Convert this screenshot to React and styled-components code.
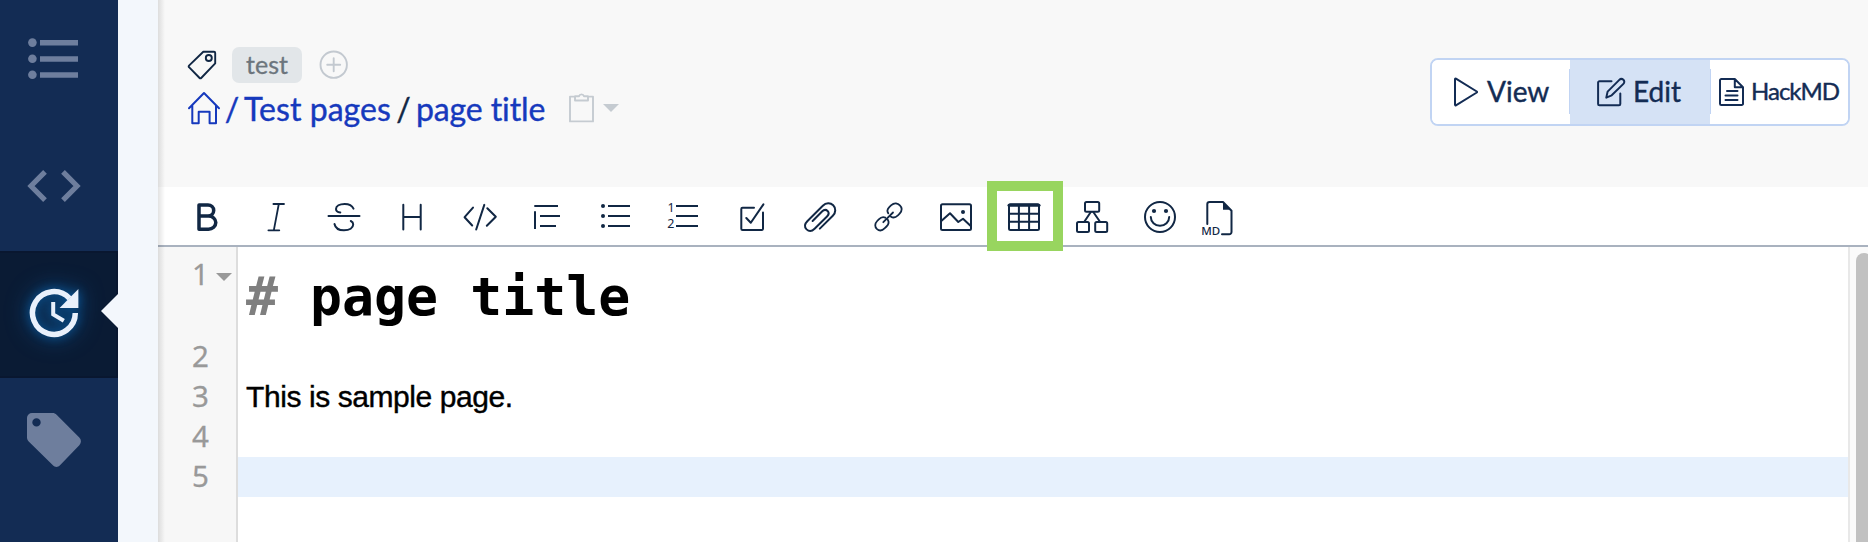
import React from "react";
import styled, { createGlobalStyle, css } from "styled-components";

const GlobalStyle = createGlobalStyle`
  *, *::before, *::after { box-sizing: border-box; }
  html, body { margin: 0; padding: 0; }
  body {
    overflow: hidden;
    font-family: Lato, "Liberation Sans", sans-serif;
    font-variant-ligatures: none;
    color: #112744;
  }
  svg { display: block; overflow: visible; flex: none; }
`;

const Page = styled.div`
  display: flex;
  width: 1868px;
  height: 542px;
  background: #f8f8f8;
`;

const Sidebar = styled.nav`
  display: flex;
  flex-direction: column;
  width: 118px;
  flex: none;
  background: #132c54;
`;

const SideItem = styled.a`
  position: relative;
  height: ${(p) => p.$height || 127}px;
  flex: none;
  padding: 35px 0 0 27px;
  color: #6e7e9d;
  ${(p) =>
    p.$active &&
    css`
      color: #e9f0fb;
      background: #0a1b34;
      box-shadow: inset -2px 2px 0 #091730, inset 0 -2px 0 #091730;
      svg {
        filter: drop-shadow(0 0 5px #0a5799) drop-shadow(0 0 10px #0b4a82);
      }
      &::after {
        content: "";
        position: absolute;
        right: 0;
        top: 43px;
        border: 17px solid transparent;
        border-left: 0;
        border-right-color: #f3f7fc;
      }
    `}
`;

const Strip = styled.div`
  width: 40px;
  flex: none;
  background: #f3f7fc;
`;

const Main = styled.main`
  display: flex;
  flex-direction: column;
  flex: 1;
  min-width: 0;
  position: relative;
  &::before {
    content: "";
    position: absolute;
    z-index: 2;
    left: 0;
    top: 0;
    bottom: 0;
    width: 7px;
    background: linear-gradient(90deg, rgba(0, 0, 0, 0.11), rgba(0, 0, 0, 0));
  }
`;

const Header = styled.header`
  display: flex;
  justify-content: space-between;
  align-items: flex-start;
  height: 187px;
  flex: none;
  padding: 47px 18px 0 30px;
  background: #f8f8f8;
`;

const TagRow = styled.div`
  display: flex;
  align-items: center;
  height: 36px;
`;

const Tag = styled.span`
  width: 70px;
  height: 36px;
  margin: 0 17px 0 16px;
  border-radius: 7px;
  background: #e2e6e9;
  color: #6c757d;
  font-size: 25px;
  line-height: 35px;
  text-align: center;
  -webkit-text-stroke: 0.3px currentColor;
`;

const PlusIcon = styled.span`
  color: #c3c9d0;
`;

const Crumbs = styled.div`
  display: flex;
  align-items: center;
  height: 48px;
  margin-top: 1px;
  font-size: 32px;
  line-height: 48px;
  white-space: pre;
  -webkit-text-stroke: 0.4px currentColor;
  svg { -webkit-text-stroke: 0; }
`;

const Crumb = styled.a`
  color: #1639bd;
  padding-top: ${(p) => (p.$icon ? 0 : 2)}px;
  letter-spacing: ${(p) => p.$spacing || 0}px;
`;

const Slash = styled.span`
  width: ${(p) => p.$width}px;
  padding-top: 2px;
  text-align: center;
  color: ${(p) => (p.$dark ? "#112744" : "#1639bd")};
`;

const CopyMenu = styled.button`
  display: flex;
  align-items: center;
  gap: 9px;
  margin: 0 0 0 24px;
  padding: 0;
  border: 0;
  background: none;
  color: #c5cbd1;
`;

const ModeGroup = styled.div`
  display: flex;
  width: 420px;
  height: 68px;
  margin-top: 11px;
  border: 2px solid #c1d4f3;
  border-radius: 8px;
  background: #fff;
  overflow: hidden;
`;

const ModeLabel = styled.span`
  padding-bottom: 2px;
  -webkit-text-stroke: 0.4px currentColor;
`;

const ModeButton = styled.button`
  display: flex;
  align-items: center;
  position: relative;
  width: ${(p) => p.$width}px;
  height: 64px;
  margin: 0;
  padding: 0 0 0 ${(p) => p.$pad}px;
  gap: ${(p) => p.$gap}px;
  border: 0;
  background: ${(p) => (p.$active ? "#d5e2f5" : "#fff")};
  color: #132c54;
  font-family: Lato, sans-serif;
  font-size: ${(p) => p.$size}px;
  letter-spacing: ${(p) => p.$spacing || 0}px;
  line-height: 40px;
  white-space: nowrap;
  ${(p) =>
    p.$active &&
    css`
      &::before,
      &::after {
        content: "";
        position: absolute;
        top: 9px;
        height: 45px;
        width: 1px;
        background: #c1d4f3;
      }
      &::before { left: -1px; }
      &::after { right: -1px; }
      z-index: 1;
    `}
`;

const Toolbar = styled.div`
  display: flex;
  height: 60px;
  flex: none;
  padding-left: 16px;
  background: #fff;
  border-bottom: 2px solid #a9b2bf;
`;

const Tool = styled.button`
  display: flex;
  align-items: center;
  justify-content: center;
  position: relative;
  width: ${(p) => p.$width || 68}px;
  height: 58px;
  margin: 0;
  padding: 0;
  border: 0;
  background: none;
  color: #112744;
  ${(p) =>
    p.$marked &&
    css`
      &::after {
        content: "";
        position: absolute;
        z-index: 3;
        left: -3px;
        top: -6px;
        width: 76px;
        height: 70px;
        border: 10px solid #98d55f;
      }
    `}
`;

const Editor = styled.div`
  display: flex;
  flex: 1;
  min-height: 0;
`;

const Gutter = styled.div`
  display: flex;
  flex-direction: column;
  width: 80px;
  padding-top: 7px;
  background: #f7f7f7;
  border-right: 2px solid #ddd;
`;

const LineNumber = styled.div`
  display: flex;
  align-items: flex-start;
  height: ${(p) => p.$height || 40}px;
  padding-left: 34px;
  color: #999;
  font: 29.5px/40px "Noto Sans", sans-serif;
  -webkit-text-stroke: 0.3px currentColor;
`;

const Fold = styled.span`
  margin: 19px 0 0 7px;
  border: 8px solid transparent;
  border-top-color: #999;
  border-bottom: 0;
`;

const Code = styled.div`
  flex: 1;
  padding-top: 8px;
  background: #fff;
`;

const Line = styled.div`
  height: 40px;
  padding-left: 8px;
  background: ${(p) => (p.$current ? "#e7f1fd" : "transparent")};
  color: #000;
  font: 30px/40px "Liberation Sans", Arial, sans-serif;
  letter-spacing: -0.42px;
  -webkit-text-stroke: 0.4px currentColor;
  white-space: pre;
`;

const HeadingLine = styled.div`
  height: 82px;
  padding-left: 8px;
  color: #000;
  font: bold 53.2px/84px "DejaVu Sans Mono", monospace;
  white-space: pre;
`;

const Mark = styled.span`
  color: #7f7f7f;
`;

const ScrollTrack = styled.div`
  width: 20px;
  padding: 6px 0 0 6px;
  border-left: 2px solid #e8e8e8;
  background: #fafafa;
  overflow: hidden;
`;

const Thumb = styled.div`
  width: 16px;
  height: 400px;
  border-radius: 8px;
  background: #c1c1c1;
`;

const Svg = ({ w, h, sw = 2, children, cap = "round" }) => (
  <svg width={w} height={h} viewBox={`0 0 ${w} ${h}`} fill="none" stroke="currentColor"
    strokeWidth={sw} strokeLinecap={cap} strokeLinejoin="round" aria-hidden="true">
    {children}
  </svg>
);

const IconText = styled.text`
  font-family: "Noto Sans", sans-serif;
  font-weight: ${(p) => p.$weight || 400};
  fill: currentColor;
  stroke: none;
`;

const tools = [
  { id: "bold", sw: 3.5, art: <path d="M11 9V33.2H20.5a7.3 6.6 0 0 0 0-13.200H11M11 9H20a5.700 5.500 0 0 1 0 11" /> },
  { id: "italic", sw: 1.8, art: <path d="M17.4 8H28M12.4 34.3H23.3M22.8 8L17.8 34.3" /> },
  { id: "strike", art: <path d="M4.5 20H35.5M29.5 12.7C28 9.5 25 8 20.7 8C15.5 8 12 10 12 13C12 15 13.5 16.2 16.3 16.5M10.5 28C11.3 32 15 34.3 20 34.3C25.5 34.3 29.2 32 29.2 28.3C29.2 27 28.3 25.7 26.8 25" /> },
  { id: "heading", art: <path d="M11.3 8.8V33.4M28.7 8.8V33.4M11.3 21H28.7" /> },
  { id: "code", art: <path d="M13 11.6L4.6 21.2L12.2 29.5M24.3 8.9L16.2 33.5M27.3 12.2L35.8 20.8L26.8 29.8" /> },
  { id: "quote", cap: "butt", art: <path d="M6.3 10H30M7 15.3V33M12 20H32M12 30H28" /> },
  { id: "ul", cap: "butt", art: (<><path d="M12 10H34M12 20H34M12 30H34" /><g fill="currentColor" stroke="none"><circle cx="7" cy="10" r="2" /><circle cx="7" cy="20" r="2" /><circle cx="7" cy="30" r="2" /></g></>) },
  { id: "ol", cap: "butt", art: (<><path d="M12 10H34M12 20H34M12 30H34" /><IconText x="3.4" y="16" fontSize="12.5">1</IconText><IconText x="3.2" y="32" fontSize="12.5">2</IconText></>) },
  { id: "check", art: <path d="M22 11.7H10.5a1.2 1.2 0 0 0-1.2 1.2V32.8a1.2 1.2 0 0 0 1.2 1.2H29.8a1.2 1.2 0 0 0 1.2-1.2V16.5M14.3 22L18.8 26.8L31.4 8.4" /> },
  { id: "attach", art: <path d="M19.8 32.6L32.8 19.8C36 16.6 36 12 33.2 9.3C30.4 6.5 26 6.6 22.8 9.7L7.3 25.2C4.5 28 4.5 31.2 6.6 33.4C8.8 35.5 12 35.3 14.6 32.8L27 20.5C28.9 18.6 29 16.4 27.6 14.9C26.1 13.5 23.9 13.6 22 15.5L12.6 25" /> },
  { id: "link", sw: 1.8, art: <path d="M15.3 26.2L25 16.5M20.3 17.4C18.8 15.4 19.4 13 21.5 10.9L23.3 9.2C26.3 6.5 29.9 7.3 31.9 9.4C34 11.5 34.2 14.8 31.6 17.7L29.9 19.4C27.6 21.6 25 22 23 20.7M17.3 21.6C15.2 20.6 12.8 21.2 10.8 23.3L9.2 25C6.5 27.8 6.8 31 8.8 32.9C10.9 34.8 14.1 34.9 16.8 32.2L18.5 30.5C20.8 28.2 21 25.6 19.8 23.7" /> },
  { id: "image", art: (<><rect x="5" y="8.2" width="30" height="25.8" rx="1.5" /><path d="M5 25.2L14 17.2L22.3 26L27 22.7L35 30.2" /><circle cx="27" cy="16" r="2" fill="currentColor" stroke="none" /></>) },
  { id: "table", marked: true, art: (<><rect x="5" y="8.2" width="30" height="25.8" rx="1.5" /><path d="M5 9.3H35" strokeWidth="3" /><path d="M14.9 9V34M25.1 9V34M5 17.7H35M5 25.7H35" /></>) },
  { id: "diagram", art: (<><rect x="13" y="6" width="14.2" height="9.8" rx="1.5" /><rect x="5" y="26" width="12" height="10" rx="1.5" /><rect x="23.2" y="26" width="12" height="10" rx="1.5" /><path d="M18.8 16L12.3 25.8M21.3 16L28 25.8" /></>) },
  { id: "emoji", art: (<><circle cx="20" cy="21" r="15" /><path d="M10.8 21a9.2 8.7 0 0 0 18.4 0" /><g fill="currentColor" stroke="none"><circle cx="14" cy="15" r="2.1" /><circle cx="26" cy="15" r="2.1" /></g></>) },
  { id: "markdown", width: 52, art: (<><path d="M7.3 28V8.3a2.3 2.3 0 0 1 2.3-2.3H23L31.5 14.7V36a2.3 2.3 0 0 1-2.3 2.3H22" /><path d="M23 6.5V13.8H30.7Z" fill="currentColor" stroke="none" /><IconText x="1.2" y="39.2" fontSize="11.5" $weight={500}>MD</IconText></>) },
];

export default function App() {
  return (
    <Page>
      <GlobalStyle />
      <Sidebar>
        <SideItem $height={124}>
          <Svg w={54} h={54} cap="butt" sw={5.5}>
            <path d="M13 7.8H51M13 24H51M13 40H51" />
            <g fill="currentColor" stroke="none"><circle cx="5.4" cy="7.6" r="4.3" /><circle cx="5.4" cy="23.8" r="4.3" /><circle cx="5.4" cy="39.8" r="4.3" /></g>
          </Svg>
        </SideItem>
        <SideItem>
          <Svg w={54} h={54} cap="butt" sw={5.2}>
            <path d="M18 12.9L4 27L18 41.1M36 12.9L50 27L36 41.1" style={{ strokeLinejoin: "miter" }} />
          </Svg>
        </SideItem>
        <SideItem $active>
          <Svg w={54} h={54} cap="butt" sw={5.5}>
            <path d="M48.3 27A21.4 21.4 0 1 1 42.5 12.3" />
            <path d="M51.4 3V22H32.6Z" fill="currentColor" stroke="none" />
            <path d="M26.2 16V28.4L36.8 34.8" strokeWidth="4" style={{ strokeLinejoin: "miter" }} />
          </Svg>
        </SideItem>
        <SideItem>
          <Svg w={54} h={54}>
            <path fill="currentColor" stroke="none" fillRule="evenodd" d="M5 0H25.5C27.2 0 28.4.5 29.6 1.7L52.3 24.6C54.5 26.8 54.5 30 52.3 32.2L33 52.3C30.9 54.5 28 54.5 25.9 52.3L1.7 28.4C.5 27.2 0 26 0 24.3V5A5 5 0 0 1 5 0ZM9.5 5.2A4.2 4.2 0 1 0 9.5 13.6A4.2 4.2 0 1 0 9.5 5.2Z" />
          </Svg>
        </SideItem>
      </Sidebar>
      <Strip />
      <Main>
        <Header>
          <div>
            <TagRow>
              <Svg w={28} h={30} sw={1.9}>
                <path d="M15.3 1.8H26a1.2 1.2 0 0 1 1.2 1.2V13.4L13.2 28a1.1 1.1 0 0 1-1.6 0L1 17.2a1.1 1.1 0 0 1 0-1.6Z" />
                <circle cx="20.8" cy="8" r="3" />
              </Svg>
              <Tag>test</Tag>
              <PlusIcon>
                <Svg w={30} h={28} sw={1.9}><circle cx="14.7" cy="13.7" r="13.2" /><path d="M8.2 13.7H21.2M14.7 7.2V20.2" /></Svg>
              </PlusIcon>
            </TagRow>
            <Crumbs>
              <Crumb $icon>
                <Svg w={32} h={34} sw={2}>
                  <path d="M1 17.2L16 2L31 17.2M4.3 14.5V32.2H10.7V20.8H21.6V32.2H28V14.5" />
                </Svg>
              </Crumb>
              <Slash $width={24}>/</Slash>
              <Crumb $spacing={0.05}>Test pages</Crumb>
              <Slash $width={25} $dark>/</Slash>
              <Crumb $spacing={-0.1}>page title</Crumb>
              <CopyMenu>
                <Svg w={25} h={30} sw={1.9}>
                  <path d="M4.5 3.6H1V28.4H24V3.6H20.5M6 7.5V3.3H10a2.6 2.6 0 0 1 5 0H19V7.5Z" />
                </Svg>
                <Svg w={16} h={8}><path d="M0 0H16L8 8Z" fill="currentColor" stroke="none" /></Svg>
              </CopyMenu>
            </Crumbs>
          </div>
          <ModeGroup>
            <ModeButton $width={138} $pad={22} $gap={9} $size={28}>
              <Svg w={24} h={28} sw={2}><path d="M1 1.2V26.8a.6.6 0 0 0 .9.5L22.8 14.5a.6.6 0 0 0 0-1L1.9.7A.6.6 0 0 0 1 1.2Z" /></Svg>
              <ModeLabel>View</ModeLabel>
            </ModeButton>
            <ModeButton $active $width={140} $pad={27} $gap={7} $size={28}>
              <Svg w={29} h={28} sw={2}>
                <path d="M14.5 3.3H2.4A1.3 1.3 0 0 0 1.1 4.600V26a1.300 1.300 0 0 0 1.300 1.300H22a1.300 1.300 0 0 0 1.300-1.300V15.500" />
                <path d="M9.300 19.600L10.600 13.600L22.300 1.900C23.500.7 25.200.7 26.400 1.800C27.600 3 27.600 4.700 26.400 5.900L14.700 17.300Z" />
              </Svg>
              <ModeLabel>Edit</ModeLabel>
            </ModeButton>
            <ModeButton $width={138} $pad={9} $gap={7} $size={24} $spacing={-1}>
              <Svg w={25} h={28} sw={2}>
                <path d="M2.300 1H15.800L24 9.200V25.700a1.300 1.300 0 0 1-1.300 1.300H2.300A1.300 1.300 0 0 1 1 25.700V2.300A1.300 1.300 0 0 1 2.300 1ZM15.800 1V9.200H24M8 13H18.500M6.500 17.500H18.500M6.500 22H18.500" />
              </Svg>
              <ModeLabel>HackMD</ModeLabel>
            </ModeButton>
          </ModeGroup>
        </Header>
        <Toolbar>
          {tools.map((t) => (
            <Tool key={t.id} $width={t.width} $marked={t.marked} aria-label={t.id}>
              <Svg w={40} h={40} sw={t.sw} cap={t.cap}>{t.art}</Svg>
            </Tool>
          ))}
        </Toolbar>
        <Editor>
          <Gutter>
            <LineNumber $height={82}>1<Fold /></LineNumber>
            <LineNumber>2</LineNumber>
            <LineNumber>3</LineNumber>
            <LineNumber>4</LineNumber>
            <LineNumber>5</LineNumber>
          </Gutter>
          <Code>
            <HeadingLine><Mark>#</Mark> page title</HeadingLine>
            <Line />
            <Line>This is sample page.</Line>
            <Line />
            <Line $current />
          </Code>
          <ScrollTrack><Thumb /></ScrollTrack>
        </Editor>
      </Main>
    </Page>
  );
}
